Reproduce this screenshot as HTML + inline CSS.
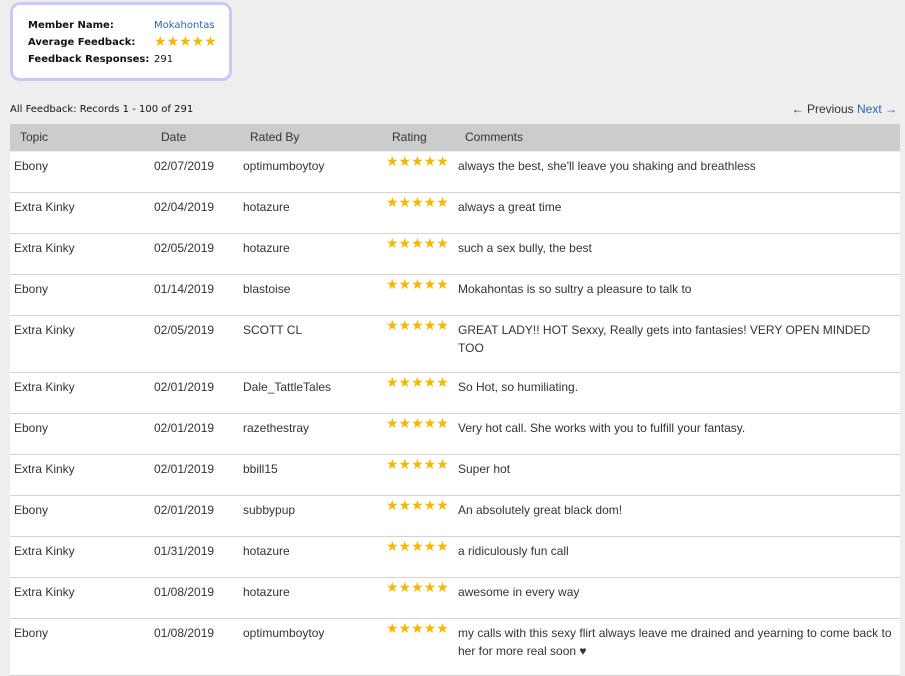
<!DOCTYPE html>
<html><head><meta charset="utf-8"><style>
body{margin:0;background:#eee;width:905px;height:676px;overflow:hidden;position:relative;font-family:"Liberation Sans",Arial,sans-serif;color:#333}
.card{position:absolute;left:10px;top:2px;width:216px;height:73px;background:#fff;border:3px solid #c9c9f3;border-radius:10px;font-family:"DejaVu Sans",Verdana,sans-serif;font-size:10px;color:#111}
.card div{position:absolute;white-space:nowrap}
.b{font-weight:bold}
.st{color:#f5b800;letter-spacing:0px;font-family:"DejaVu Sans",sans-serif}
.rec{position:absolute;left:10px;top:104px;font-family:"DejaVu Sans",Verdana,sans-serif;font-size:10px;color:#111}
.nav{position:absolute;right:8px;top:102px;font-size:12px;color:#333}
.nav span{color:#2a64b8}
.hd{position:absolute;left:10px;top:124px;width:890px;height:27px;background:#ccc;font-size:12px;color:#333}
.hd div,.r div{position:absolute;white-space:nowrap}
.hd div{top:6px}
.r{position:absolute;left:10px;width:890px;background:#fff;border-bottom:1px solid #d4d4d4;font-size:12px;color:#333}
.r div{top:5px;line-height:18px}
.r .c5{width:440px;white-space:normal}
.r .st{top:1px;font-size:14px;line-height:18px}
</style></head><body>
<div class="card">
<div class="b" style="left:15px;top:15px">Member Name:</div>
<div style="left:141px;top:15px;color:#2a64b8">Mokahontas</div>
<div class="b" style="left:15px;top:32px">Average Feedback:</div>
<div class="st" style="left:141px;top:29px;font-size:14px">★★★★★</div>
<div class="b" style="left:15px;top:49px">Feedback Responses:</div>
<div style="left:141px;top:49px">291</div>
</div>
<div class="rec">All Feedback: Records 1 - 100 of 291</div>
<div class="nav">← Previous <span>Next →</span></div>
<div class="hd"><div style="left:10px">Topic</div><div style="left:151px">Date</div><div style="left:240px">Rated By</div><div style="left:382px">Rating</div><div style="left:455px">Comments</div></div>
<div class="r" style="top:152px;height:40px"><div style="left:4px">Ebony</div><div style="left:144px">02/07/2019</div><div style="left:233px">optimumboytoy</div><div class="st" style="left:376px">★★★★★</div><div class="c5" style="left:448px">always the best, she'll leave you shaking and breathless</div></div>
<div class="r" style="top:193px;height:40px"><div style="left:4px">Extra Kinky</div><div style="left:144px">02/04/2019</div><div style="left:233px">hotazure</div><div class="st" style="left:376px">★★★★★</div><div class="c5" style="left:448px">always a great time</div></div>
<div class="r" style="top:234px;height:40px"><div style="left:4px">Extra Kinky</div><div style="left:144px">02/05/2019</div><div style="left:233px">hotazure</div><div class="st" style="left:376px">★★★★★</div><div class="c5" style="left:448px">such a sex bully, the best</div></div>
<div class="r" style="top:275px;height:40px"><div style="left:4px">Ebony</div><div style="left:144px">01/14/2019</div><div style="left:233px">blastoise</div><div class="st" style="left:376px">★★★★★</div><div class="c5" style="left:448px">Mokahontas is so sultry a pleasure to talk to</div></div>
<div class="r" style="top:316px;height:56px"><div style="left:4px">Extra Kinky</div><div style="left:144px">02/05/2019</div><div style="left:233px">SCOTT CL</div><div class="st" style="left:376px">★★★★★</div><div class="c5" style="left:448px">GREAT LADY!! HOT Sexxy, Really gets into fantasies! VERY OPEN MINDED TOO</div></div>
<div class="r" style="top:373px;height:40px"><div style="left:4px">Extra Kinky</div><div style="left:144px">02/01/2019</div><div style="left:233px">Dale_TattleTales</div><div class="st" style="left:376px">★★★★★</div><div class="c5" style="left:448px">So Hot, so humiliating.</div></div>
<div class="r" style="top:414px;height:40px"><div style="left:4px">Ebony</div><div style="left:144px">02/01/2019</div><div style="left:233px">razethestray</div><div class="st" style="left:376px">★★★★★</div><div class="c5" style="left:448px">Very hot call. She works with you to fulfill your fantasy.</div></div>
<div class="r" style="top:455px;height:40px"><div style="left:4px">Extra Kinky</div><div style="left:144px">02/01/2019</div><div style="left:233px">bbill15</div><div class="st" style="left:376px">★★★★★</div><div class="c5" style="left:448px">Super hot</div></div>
<div class="r" style="top:496px;height:40px"><div style="left:4px">Ebony</div><div style="left:144px">02/01/2019</div><div style="left:233px">subbypup</div><div class="st" style="left:376px">★★★★★</div><div class="c5" style="left:448px">An absolutely great black dom!</div></div>
<div class="r" style="top:537px;height:40px"><div style="left:4px">Extra Kinky</div><div style="left:144px">01/31/2019</div><div style="left:233px">hotazure</div><div class="st" style="left:376px">★★★★★</div><div class="c5" style="left:448px">a ridiculously fun call</div></div>
<div class="r" style="top:578px;height:40px"><div style="left:4px">Extra Kinky</div><div style="left:144px">01/08/2019</div><div style="left:233px">hotazure</div><div class="st" style="left:376px">★★★★★</div><div class="c5" style="left:448px">awesome in every way</div></div>
<div class="r" style="top:619px;height:56px"><div style="left:4px">Ebony</div><div style="left:144px">01/08/2019</div><div style="left:233px">optimumboytoy</div><div class="st" style="left:376px">★★★★★</div><div class="c5" style="left:448px">my calls with this sexy flirt always leave me drained and yearning to come back to her for more real soon ♥</div></div>
</body></html>
